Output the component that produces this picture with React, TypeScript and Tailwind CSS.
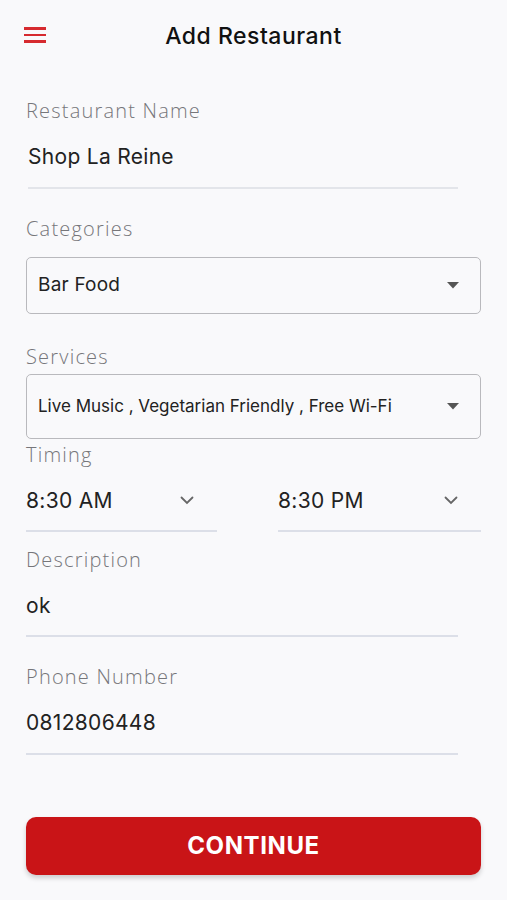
import React from 'react';

const labelCls = "text-[20px] leading-none text-[#76767a] font-light tracking-[1.2px] [font-family:'Open_Sans','Noto_Sans',sans-serif]";
const valueCls = "text-[21px] leading-none text-[#222] tracking-[0.3px] [font-family:Inter,'Noto_Sans',sans-serif]";

const Caret: React.FC = () => (
  <svg width="12" height="7" viewBox="0 0 12 7" className="shrink-0">
    <path d="M0 0h12L6 6.5z" fill="#555" />
  </svg>
);

const Chevron: React.FC = () => (
  <svg width="14" height="9" viewBox="0 0 14 9" className="shrink-0">
    <path d="M1.5 1.5L7 7l5.5-5.5" fill="none" stroke="#666" strokeWidth="1.8" strokeLinecap="round" />
  </svg>
);

export default function App() {
  return (
    <div className="min-h-[900px] w-[507px] bg-[#f9f9fb] [font-family:Inter,sans-serif]">
      {/* header */}
      <div className="relative flex h-[72px] items-center justify-center">
        <button className="absolute left-[24px] top-[27px] flex w-[22px] flex-col gap-[4px]">
          <span className="h-[2.5px] w-full bg-[#d62a2f]" />
          <span className="h-[2.5px] w-full bg-[#d62a2f]" />
          <span className="h-[2.5px] w-full bg-[#d62a2f]" />
        </button>
        <h1 className="text-[23px] font-medium text-[#111] tracking-[0.5px]">Add Restaurant</h1>
      </div>

      <div className="px-[26px]">
        {/* restaurant name */}
        <div className="mt-[29px]">
          <div className={labelCls}>Restaurant Name</div>
          <div className={`${valueCls} ml-[2px] mt-[25px]`}>Shop La Reine</div>
          <div className="ml-[2px] mt-[20px] h-[2px] w-[430px] bg-[#e3e5ea]" />
        </div>

        {/* categories */}
        <div className="mt-[30px]">
          <div className={labelCls}>Categories</div>
          <div className="mt-[18px] flex h-[57px] items-center justify-between rounded-[5px] border border-[#b9b9bd] pl-[11px] pr-[21px]">
            <span className="text-[19px] tracking-[0.2px] text-[#222]">Bar Food</span>
            <Caret />
          </div>
        </div>

        {/* services */}
        <div className="mt-[33px]">
          <div className={labelCls}>Services</div>
          <div className="mt-[7px] flex h-[65px] items-center justify-between rounded-[5px] border border-[#b9b9bd] pl-[11px] pr-[21px]">
            <span className="text-[17px] text-[#222]">Live Music , Vegetarian Friendly , Free Wi-Fi</span>
            <Caret />
          </div>
        </div>

        {/* timing */}
        <div className="mt-[6px]">
          <div className={labelCls}>Timing</div>
          <div className="mt-[25px] flex justify-between">
            <div className="w-[191px]">
              <div className="flex items-center justify-between pr-[23px]">
                <span className={valueCls}>8:30 AM</span>
                <Chevron />
              </div>
              <div className="mt-[19px] h-[2px] bg-[#dcdfe8]" />
            </div>
            <div className="w-[203px]">
              <div className="flex items-center justify-between pr-[23px]">
                <span className={valueCls}>8:30 PM</span>
                <Chevron />
              </div>
              <div className="mt-[19px] h-[2px] bg-[#dcdfe8]" />
            </div>
          </div>
        </div>

        {/* description */}
        <div className="mt-[18px]">
          <div className={labelCls}>Description</div>
          <div className={`${valueCls} mt-[25px]`}>ok</div>
          <div className="mt-[19px] h-[2px] w-[432px] bg-[#dcdfe8]" />
        </div>

        {/* phone */}
        <div className="mt-[30px]">
          <div className={labelCls}>Phone Number</div>
          <div className={`${valueCls} mt-[25px]`}>0812806448</div>
          <div className="mt-[20px] h-[2px] w-[432px] bg-[#dcdfe8]" />
        </div>

        <button className="mt-[62px] flex h-[58px] w-full items-center justify-center rounded-[10px] bg-[#c91417] text-[24px] font-bold tracking-[0.6px] text-white shadow-[0_3px_5px_rgba(0,0,0,0.18)] [font-family:Inter,sans-serif]">
          CONTINUE
        </button>
      </div>
    </div>
  );
}
